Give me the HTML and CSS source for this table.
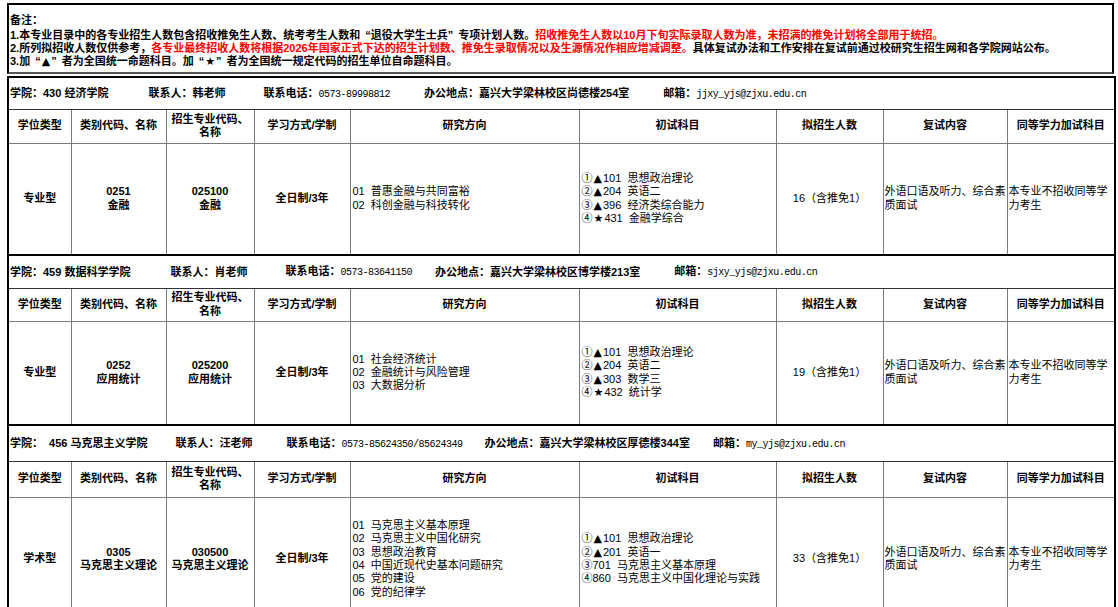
FILE: index.html
```html
<!DOCTYPE html>
<html lang="zh-CN">
<head>
<meta charset="utf-8">
<title>招生专业目录</title>
<link rel="stylesheet" href="styles.css">
</head>
<body>
<div class="page">
  <div class="notes">
    <div class="notes-title">备注：</div>
    <div class="note-line">1.本专业目录中的各专业招生人数包含招收推免生人数、统考考生人数和<span class="ql">“</span>退役大学生士兵<span class="qr">”</span>专项计划人数。<span class="red">招收推免生人数以10月下旬实际录取人数为准，未招满的推免计划将全部用于统招。</span></div>
    <div class="note-line">2.所列拟招收人数仅供参考，<span class="red">各专业最终招收人数将根据2026年国家正式下达的招生计划数、推免生录取情况以及生源情况作相应增减调整。</span>具体复试办法和工作安排在复试前通过校研究生招生网和各学院网站公布。</div>
    <div class="note-line">3.加<span class="ql">“</span><span class="sym">▲</span><span class="qr">”</span>者为全国统一命题科目。加<span class="ql">“</span><span class="sym">★</span><span class="qr">”</span>者为全国统一规定代码的招生单位自命题科目。</div>
  </div>

  <table class="grid">
    <colgroup>
      <col class="c1"><col class="c2"><col class="c3"><col class="c4"><col class="c5"><col class="c6"><col class="c7"><col class="c8"><col class="c9">
    </colgroup>
    <tbody>
      <tr class="college r-c1">
        <td colspan="9">
          <div class="college-info">
            <span class="ci-a">学院：430 经济学院</span>
            <span class="ci-b">联系人：韩老师</span>
            <span class="ci-c">联系电话：<span class="mono">0573-89998812</span></span>
            <span class="ci-d">办公地点：嘉兴大学梁林校区尚德楼254室</span>
            <span class="ci-e">邮箱：<span class="mono">jjxy_yjs@zjxu.edu.cn</span></span>
          </div>
        </td>
      </tr>
      <tr class="head r-h1">
        <th>学位类型</th><th>类别代码、名称</th><th class="narrow">招生专业代码、名称</th><th>学习方式/学制</th><th>研究方向</th><th>初试科目</th><th>拟招生人数</th><th>复试内容</th><th>同等学力加试科目</th>
      </tr>
      <tr class="row r-b1">
        <td class="ctr strong">专业型</td>
        <td class="ctr strong">0251<br>金融</td>
        <td class="ctr strong">025100<br>金融</td>
        <td class="ctr strong">全日制/3年</td>
        <td class="left">01&nbsp; 普惠金融与共同富裕<br>02&nbsp; 科创金融与科技转化</td>
        <td class="left">①<span class="sym">▲</span>101&nbsp; 思想政治理论<br>②<span class="sym">▲</span>204&nbsp; 英语二<br>③<span class="sym">▲</span>396&nbsp; 经济类综合能力<br>④<span class="sym">★</span>431&nbsp; 金融学综合</td>
        <td class="ctr">16（含推免1）</td>
        <td class="left">外语口语及听力、综合素质面试</td>
        <td class="left">本专业不招收同等学力考生</td>
      </tr>

      <tr class="college r-c2">
        <td colspan="9">
          <div class="college-info">
            <span class="ci-a">学院：459 数据科学学院</span>
            <span class="ci-b">联系人：肖老师</span>
            <span class="ci-c">联系电话：<span class="mono">0573-83641150</span></span>
            <span class="ci-d2">办公地点：嘉兴大学梁林校区博学楼213室</span>
            <span class="ci-e">邮箱：<span class="mono">sjxy_yjs@zjxu.edu.cn</span></span>
          </div>
        </td>
      </tr>
      <tr class="head r-h2">
        <th>学位类型</th><th>类别代码、名称</th><th class="narrow">招生专业代码、名称</th><th>学习方式/学制</th><th>研究方向</th><th>初试科目</th><th>拟招生人数</th><th>复试内容</th><th>同等学力加试科目</th>
      </tr>
      <tr class="row r-b2">
        <td class="ctr strong">专业型</td>
        <td class="ctr strong">0252<br>应用统计</td>
        <td class="ctr strong">025200<br>应用统计</td>
        <td class="ctr strong">全日制/3年</td>
        <td class="left">01&nbsp; 社会经济统计<br>02&nbsp; 金融统计与风险管理<br>03&nbsp; 大数据分析</td>
        <td class="left">①<span class="sym">▲</span>101&nbsp; 思想政治理论<br>②<span class="sym">▲</span>204&nbsp; 英语二<br>③<span class="sym">▲</span>303&nbsp; 数学三<br>④<span class="sym">★</span>432&nbsp; 统计学</td>
        <td class="ctr">19（含推免1）</td>
        <td class="left">外语口语及听力、综合素质面试</td>
        <td class="left">本专业不招收同等学力考生</td>
      </tr>

      <tr class="college r-c3">
        <td colspan="9">
          <div class="college-info">
            <span class="ci-a3">学院：&nbsp; 456 马克思主义学院</span>
            <span class="ci-b3">联系人：汪老师</span>
            <span class="ci-c3">联系电话：<span class="mono">0573-85624350/85624349</span></span>
            <span class="ci-d3">办公地点：嘉兴大学梁林校区厚德楼344室</span>
            <span class="ci-e3">邮箱：<span class="mono">my_yjs@zjxu.edu.cn</span></span>
          </div>
        </td>
      </tr>
      <tr class="head r-h3">
        <th>学位类型</th><th>类别代码、名称</th><th class="narrow">招生专业代码、名称</th><th>学习方式/学制</th><th>研究方向</th><th>初试科目</th><th>拟招生人数</th><th>复试内容</th><th>同等学力加试科目</th>
      </tr>
      <tr class="row r-b3">
        <td class="ctr strong">学术型</td>
        <td class="ctr strong">0305<br>马克思主义理论</td>
        <td class="ctr strong">030500<br>马克思主义理论</td>
        <td class="ctr strong">全日制/3年</td>
        <td class="left">01&nbsp; 马克思主义基本原理<br>02&nbsp; 马克思主义中国化研究<br>03&nbsp; 思想政治教育<br>04&nbsp; 中国近现代史基本问题研究<br>05&nbsp; 党的建设<br>06&nbsp; 党的纪律学</td>
        <td class="left">①<span class="sym">▲</span>101&nbsp; 思想政治理论<br>②<span class="sym">▲</span>201&nbsp; 英语一<br>③701&nbsp; 马克思主义基本原理<br>④860&nbsp; 马克思主义中国化理论与实践</td>
        <td class="ctr">33（含推免1）</td>
        <td class="left">外语口语及听力、综合素质面试</td>
        <td class="left">本专业不招收同等学力考生</td>
      </tr>
    </tbody>
  </table>
</div>
</body>
</html>
```

FILE: styles.css
```css
html, body {
  margin: 0;
  padding: 0;
  background: #ffffff;
}

body {
  font-family: "Liberation Sans", "Noto Sans CJK SC", sans-serif;
  font-size: 11px;
  color: #000000;
  overflow: hidden;
}

.page {
  padding: 3px 0 0 7px;
  width: 1107px;
}

/* notes box */
.notes {
  border: 2px solid #000000;
  border-bottom-color: #555555;
  box-sizing: border-box;
  height: 71px;
  padding: 9px 0 0 1px;
  line-height: 13px;
  font-weight: 700;
  white-space: nowrap;
}

.notes-title {
  margin-bottom: 2px;
}

.red {
  color: #ff0000;
}

/* full-width looking quotation marks */
.ql {
  padding-left: 5px;
}

.qr {
  padding-right: 5px;
}

/* ▲ ★ symbols drawn a little larger, like the CJK full-width glyphs */
.sym {
  font-family: "DejaVu Sans", "Liberation Sans", sans-serif;
  font-size: 11px;
  padding: 0 1px;
}

/* main grid */
.grid {
  margin-top: 2px;
  width: 1107px;
  table-layout: fixed;
  border-collapse: collapse;
  line-height: 13.4px;
}

.c1 { width: 63px; }
.c2 { width: 95px; }
.c3 { width: 88px; }
.c4 { width: 96px; }
.c5 { width: 229px; }
.c6 { width: 197px; }
.c7 { width: 107px; }
.c8 { width: 124px; }
.c9 { width: 108px; }

.grid td,
.grid th {
  border: 1px solid #7a7a7a;
  padding: 0 2px;
  vertical-align: middle;
  overflow: hidden;
}

.grid tr > :first-child {
  border-left: 2px solid #000000;
}

.grid tr > :last-child {
  border-right: 2px solid #000000;
}

/* college info row */
.college td {
  border-top: 2px solid #000000;
  border-bottom: 1px solid #333333;
  padding: 1px 1px 0;
}

.college-info {
  display: flex;
  align-items: center;
  white-space: nowrap;
  font-weight: 700;
}

.mono {
  font-family: "Liberation Mono", "Noto Sans CJK SC", monospace;
  font-weight: 400;
  font-size: 10px;
  letter-spacing: -0.5px;
}

.ci-b { margin-left: 40px; }
.ci-c { margin-left: 38px; }
.ci-d { margin-left: 34px; }
.ci-d2 { margin-left: 23px; }
.ci-e { margin-left: 34px; }
.ci-b3 { margin-left: 28px; }
.ci-c3 { margin-left: 34px; }
.ci-d3 { margin-left: 22px; }
.ci-e3 { margin-left: 23px; }

/* header rows */
.head th {
  font-weight: 700;
  text-align: center;
}

.head th.narrow {
  padding: 0 4px;
}

.r-c1 { height: 32px; }
.r-h1 { height: 34px; }
.r-b1 { height: 112px; }
.r-c2 { height: 33px; }
.r-h2 { height: 33px; }
.r-b2 { height: 104px; }
.r-c3 { height: 36px; }
.r-h3 { height: 36px; }
.r-b3 { height: 124px; }

/* body rows */
.row td {
  white-space: normal;
}

.ctr {
  text-align: center;
}

.left {
  text-align: left;
}

.strong {
  font-weight: 700;
}

.row td:nth-child(8),
.row td:nth-child(9) {
  padding: 0 1px;
}
```
